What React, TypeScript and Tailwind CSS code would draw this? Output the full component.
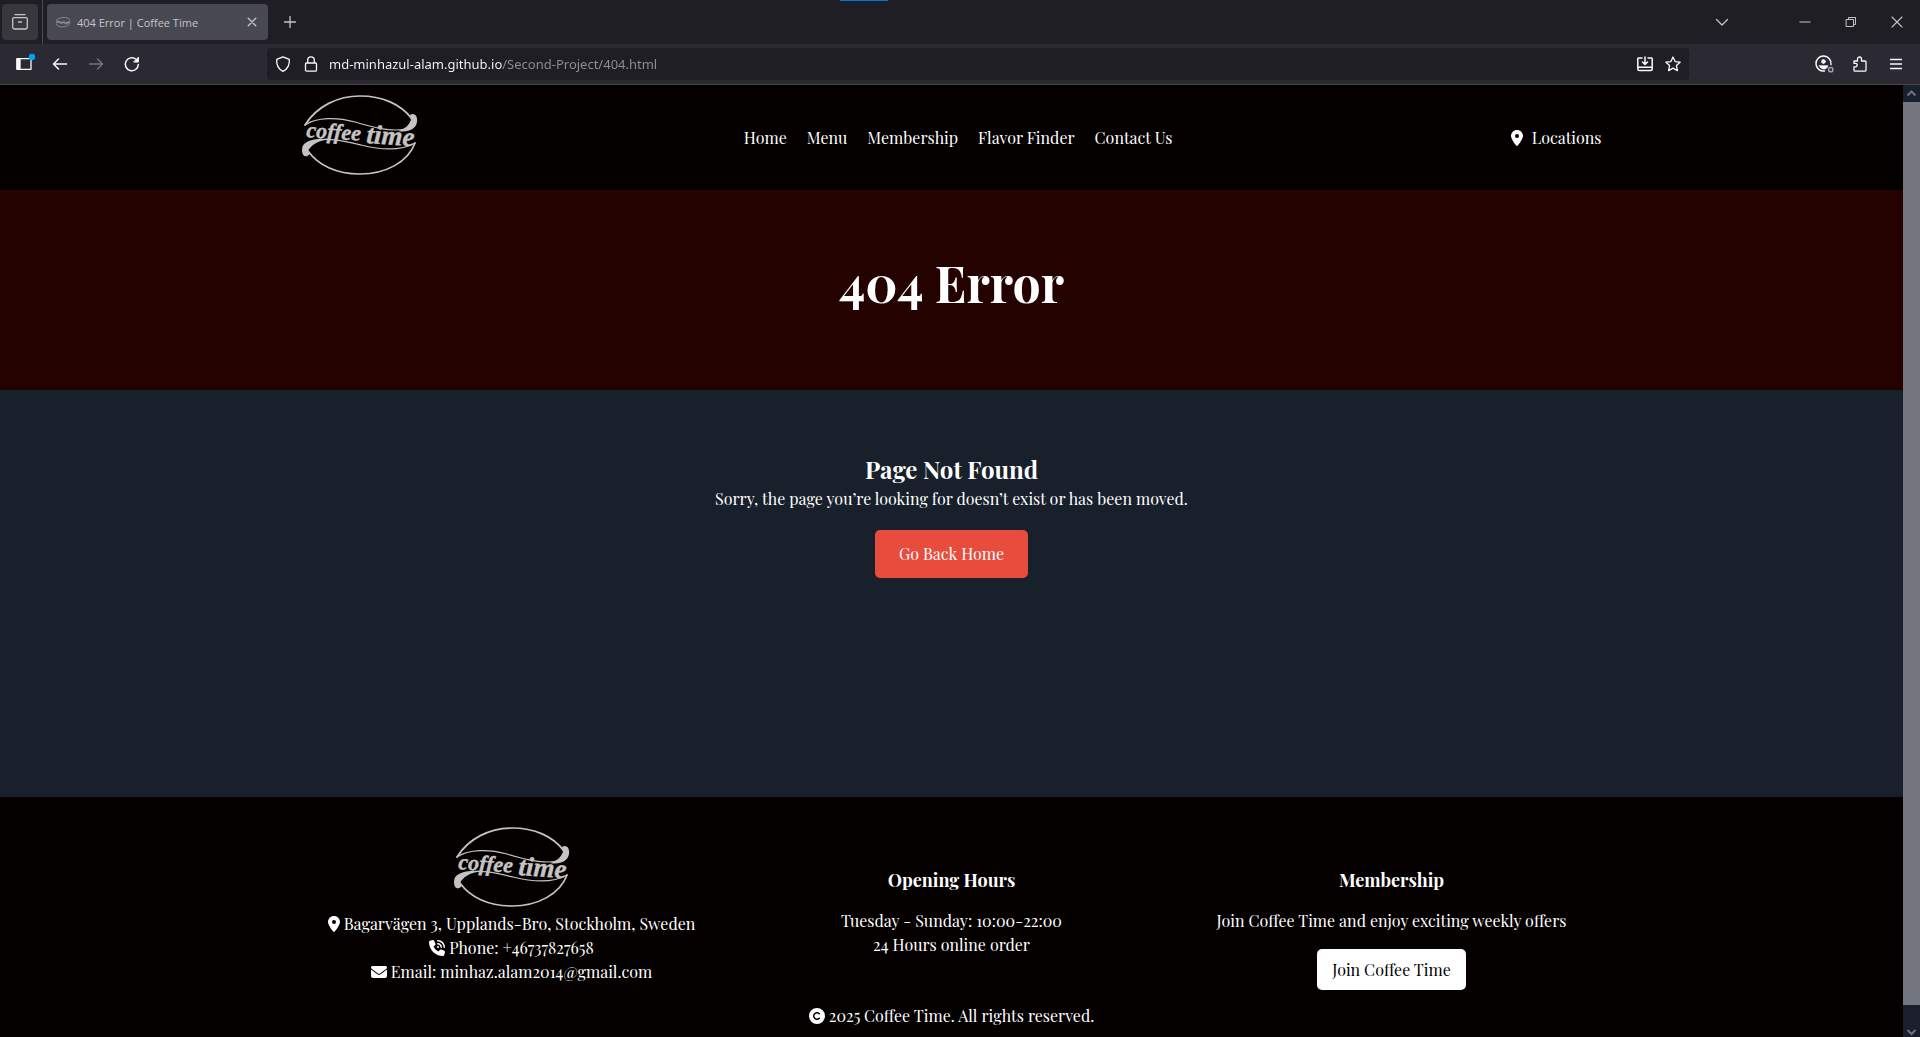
import { ReactNode } from "react";
import { FaLocationDot, FaPhoneVolume, FaEnvelope, FaCopyright } from "react-icons/fa6";

function CoffeeLogo() {
  return (
    <svg viewBox="12 11 116 85" className="h-[85px] w-[116px]" role="img" aria-label="Coffee Time">
      <g fill="none" stroke="#c4c4c4" strokeWidth="1.7" strokeLinecap="round">
        <path d="M15 41C27 22 48 12 70 12c22 0 41 8 52 23" />
        <path d="M15 41c12-8 32-8 50-3 20 6 36 10 50 7" strokeWidth="1.2" />
        <path d="M24 57c14-4 30 0 47 4 20 5 40 6 54-2" strokeWidth="1.2" />
        <path d="M125 59C118 78 96 90 70 90 46 90 28 81 18 67" />
      </g>
      <g fill="#c4c4c4">
        <path d="M120 31c5-3 8 2 7 7-1 7-9 11-19 9 7-2 11-6 13-11z" />
        <path d="M20 70c-5 5-8 1-8-4 0-8 9-12 26-11-10 2-17 6-20 12z" />
        <g stroke="#c4c4c4" strokeWidth=".4" fontStyle="italic" fontWeight="700" fontFamily="Liberation Serif, serif">
          <text x="16" y="53" transform="rotate(4 16 53)" fontSize="22">
            coffee
          </text>
          <text x="76" y="59" transform="rotate(4 76 59)" fontSize="27">
            time
          </text>
        </g>
      </g>
    </svg>
  );
}

function MiniLogo() {
  return (
    <svg viewBox="0 0 16 16" className="size-4" fill="none" stroke="#85858d" aria-hidden="true">
      <path d="M1 7c2-4 12-5 14-1M1 10c2 4 12 4 14-1" />
      <path d="M1 8.500l3-1 2 1.500 3-1 2 1.500 4-2" strokeWidth="2" />
    </svg>
  );
}

function Icon({ children, className = "size-4", label }: { children: ReactNode; className?: string; label: string }) {
  return (
    <button type="button" aria-label={label} className="flex size-8 shrink-0 items-center justify-center">
      <svg viewBox="0 0 16 16" overflow="visible" className={className} fill="none" stroke="currentColor" strokeWidth="1.3" strokeLinecap="round" strokeLinejoin="round">
        {children}
      </svg>
    </button>
  );
}

function TabBar() {
  return (
    <div className="relative flex h-11 items-center bg-[#1f1e25] text-[#c5c5c9]">
      <div className="absolute top-0 left-[840px] h-px w-12 bg-[#0078d4]" />
      <div className="ml-0.5 flex size-9 items-center justify-center rounded bg-[#37373e]">
        <Icon label="Recent browsing" className="size-4">
          <path d="M3 .7h10M2 3.700h12q1.300 0 1.300 1.300v8q0 2-2 2H2.700q-2 0-2-2V5q0-1.300 1.300-1.300zM6.500 8h3" />
        </Icon>
      </div>
      <div className="ml-1 h-full w-px bg-[#4a4a52]" />
      <div className="ml-1 flex h-9 w-[221px] items-center rounded bg-[#484852] pl-2">
        <MiniLogo />
        <span className="ml-1.5 flex-1 pt-0.5 font-['Open_Sans',sans-serif] text-[11px]">404 Error | Coffee Time</span>
        <Icon label="Close tab" className="size-3">
          <path d="M3 3l10 10M13 3L3 13" strokeWidth="1.800" />
        </Icon>
      </div>
      <div className="ml-1.5">
        <Icon label="New tab" className="size-4">
          <path d="M8 2.500v11M2.500 8h11" />
        </Icon>
      </div>
      <div className="ml-auto flex items-center">
        <Icon label="List all tabs" className="size-4">
          <path d="M2.500 5.500L8 11l5.500-5.500" />
        </Icon>
        <div className="ml-[51px] flex items-center gap-3.5 pr-[7px]">
          <Icon label="Minimize">
            <path d="M3 8h10" strokeWidth="1" strokeLinecap="square" />
          </Icon>
          <Icon label="Restore">
            <path d="M3.500 5.500h7v7h-7zM5.500 5.500v-2h7v7h-2" strokeWidth="1" />
          </Icon>
          <Icon label="Close">
            <path d="M3 3l10 10M13 3L3 13" strokeWidth="1.100" />
          </Icon>
        </div>
      </div>
    </div>
  );
}

function Toolbar() {
  return (
    <div className="flex h-[41px] items-center border-b border-[#46464e] bg-[#2b2a33] text-[#fbfbfe]">
      <div className="flex w-[267px] shrink-0 items-center gap-1 pl-2">
        <Icon label="Show sidebar">
          <path d="M1 2.700h14v10.600H1z" />
          <path d="M1 3h3v10H1z" fill="currentColor" />
          <circle cx="16" cy="1" r="2.500" fill="#00a2ff" stroke="#00a2ff" />
        </Icon>
        <Icon label="Back">
          <path d="M14.500 8H1.500M6.500 3l-5 5 5 5" strokeWidth="1.500" />
        </Icon>
        <span className="text-[#75747c]">
          <Icon label="Forward">
            <path d="M1.500 8h13M9.500 3l5 5-5 5" strokeWidth="1.500" />
          </Icon>
        </span>
        <Icon label="Reload">
          <path d="M14.300 8.500A6.500 6.500 0 1 1 12 3.300" strokeWidth="1.500" />
          <path d="M14.500 1.500v4.500H10z" fill="currentColor" strokeWidth="1" />
        </Icon>
      </div>
      <form className="flex h-8 max-w-[1422px] flex-1 items-center rounded bg-[#1f1e25]" onSubmit={(e) => e.preventDefault()}>
        <Icon label="Tracking protection">
          <path d="M8 .8l6.300 2.500c.5 6-2 10-6.300 12C3.700 13.300 1.200 9.300 1.700 3.300z" />
        </Icon>
        <div className="-ml-1">
          <Icon label="Site information">
            <path d="M3.500 7h9q1 0 1 1v6q0 1.200-1.200 1.200H3.700q-1.200 0-1.200-1.200V8q0-1 1-1zM4.700 7V4.200a3.300 3.300 0 0 1 6.600 0V7" />
          </Icon>
        </div>
        <input
          aria-label="Address"
          defaultValue="md-minhazul-alam.github.io/Second-Project/404.html"
          className="ml-0.5 min-w-0 flex-1 bg-linear-to-r from-[#fbfbfe] from-[173px] to-[#8f8f98] to-[173px] bg-clip-text pt-0.5 font-['Noto_Sans',sans-serif] text-[13px] text-transparent outline-none"
        />
        <Icon label="Install site">
          <path d="M5 2H1.500Q.8 2 .8 2.700V13q0 1.500 1.500 1.500h11.400q1.500 0 1.500-1.500V2.700q0-.7-.7-.7H11M.8 11.300h14.400M8 1v7M5.500 6L8 8.500 10.500 6" strokeWidth="1.500" />
        </Icon>
        <div className="-ml-1">
          <Icon label="Bookmark">
            <path d="M8 1l2.100 4.600 5 .6-3.700 3.400 1 5L8 12.100l-4.400 2.500 1-5L.9 6.200l5-.6z" />
          </Icon>
        </div>
      </form>
      <div className="ml-auto flex items-center gap-1 pr-2">
        <Icon label="Account" className="size-[18px]">
          <path d="M14.200 8.500A6.700 6.700 0 1 0 8.500 14.200" />
          <circle cx="7.500" cy="5.800" r="1.700" fill="currentColor" strokeWidth=".6" />
          <path d="M4 9.500h7.500c-.5 2-2 3-3.700 3S4.500 11.500 4 9.500z" fill="currentColor" strokeWidth=".6" />
          <circle cx="14" cy="13" r="1.900" stroke="#a0a0a8" />
        </Icon>
        <Icon label="Extensions">
          <path d="M2 5h3.500V3a2 2 0 0 1 4 0v2H13q1 0 1 1v8q0 1.200-1.200 1.200H3q-1 0-1-1v-3.400h1.500a1.700 1.700 0 0 0 0-3.400H2z" />
        </Icon>
        <Icon label="Open application menu">
          <path d="M2.500 3.500h11M2.500 8h11M2.500 12.500h11" />
        </Icon>
      </div>
    </div>
  );
}

const links = ["Home", "Menu", "Membership", "Flavor Finder", "Contact Us"];

function Scrollbar() {
  return (
    <div className="flex w-[17px] shrink-0 flex-col bg-[#18202b] text-[#6f737d]">
      <svg viewBox="0 0 17 17" className="size-[17px]" fill="none" stroke="currentColor" strokeWidth="2">
        <path d="M4.500 10.500l4-4 4 4" />
      </svg>
      <div className="flex-1 bg-[#74777f]" />
      <div className="flex h-8 items-end">
        <svg viewBox="0 0 17 10" className="h-2.5 w-[17px]" fill="none" stroke="currentColor" strokeWidth="2">
          <path d="M4.500 3l4 4 4-4" />
        </svg>
      </div>
    </div>
  );
}

export default function App() {
  return (
    <div className="flex min-h-screen flex-col">
      <TabBar />
      <Toolbar />
      <div className="flex flex-1">
        <div className="flex min-w-0 flex-1 flex-col bg-[#18202b] font-['Playfair_Display','Liberation_Serif',serif] text-base leading-6 text-white">
          <header className="bg-[#040000] py-2.5">
            <div className="mx-auto flex w-full max-w-[1300px] items-center justify-between">
              <a href="#home" className="-mr-3">
                <CoffeeLogo />
              </a>
              <nav className="flex gap-5">
                {links.map((link) => (
                  <a key={link} href="#nav">
                    {link}
                  </a>
                ))}
              </nav>
              <a href="#locations" className="flex items-center gap-[9px]">
                <FaLocationDot className="h-4 w-3" />
                Locations
              </a>
            </div>
          </header>
          <section className="flex h-[200px] items-center justify-center bg-[#240200]">
            <h1 className="mb-3.5 text-[50px] leading-none font-bold">404 Error</h1>
          </section>
          <main className="flex flex-1 flex-col items-center pt-[61px]">
            <h2 className="text-2xl leading-9 font-bold">Page Not Found</h2>
            <p>Sorry, the page you’re looking for doesn’t exist or has been moved.</p>
            <a href="#home" className="mt-[19px] rounded-[5px] bg-[#e84c3d] px-6 py-3">
              Go Back Home
            </a>
          </main>
          <footer className="bg-[#040000] pt-[30px] pb-[9px] text-center">
            <div className="mx-auto grid w-full max-w-[1320px] grid-cols-3">
              <address className="flex flex-col items-center not-italic">
                <CoffeeLogo />
                <p className="flex items-center gap-1">
                  <FaLocationDot className="h-4 w-3" />
                  Bagarvägen 3, Upplands-Bro, Stockholm, Sweden
                </p>
                <p className="flex items-center gap-1">
                  <FaPhoneVolume className="size-4" />
                  Phone: +46737827658
                </p>
                <p className="flex items-center gap-1">
                  <FaEnvelope className="size-4" />
                  Email: minhaz.alam2014@gmail.com
                </p>
              </address>
              <section className="pt-[41px]">
                <h3 className="mb-[17px] text-lg leading-6 font-bold">Opening Hours</h3>
                <p>Tuesday - Sunday: 10:00-22:00</p>
                <p>24 Hours online order</p>
              </section>
              <section className="flex flex-col items-center pt-[41px]">
                <h3 className="mb-[17px] text-lg leading-6 font-bold">Membership</h3>
                <p>Join Coffee Time and enjoy exciting weekly offers</p>
                <button type="button" className="mt-4 h-[41px] rounded-[5px] bg-white px-[15px] text-black">
                  Join Coffee Time
                </button>
              </section>
            </div>
            <p className="mt-3.5 flex items-center justify-center gap-1">
              <FaCopyright className="size-4" />
              2025 Coffee Time. All rights reserved.
            </p>
          </footer>
        </div>
        <Scrollbar />
      </div>
    </div>
  );
}
